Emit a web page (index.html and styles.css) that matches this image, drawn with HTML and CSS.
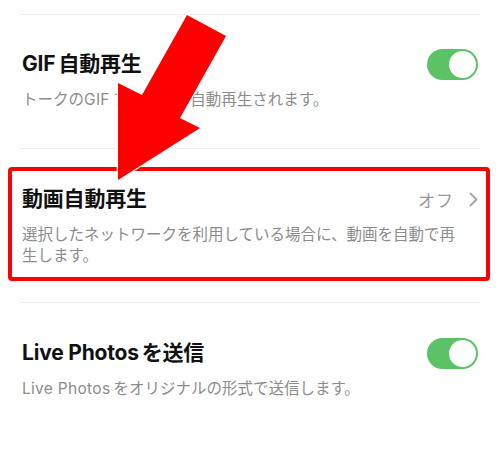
FILE: index.html
```html
<!DOCTYPE html>
<html lang="ja">
<head>
<meta charset="utf-8">
<link rel="stylesheet" href="styles.css">
</head>
<body>
<div class="page">
  <div class="list">
    <div class="row row-gif">
      <div class="row-head">
        <div class="title"><span class="lat">GIF</span>自動再生</div>
        <div class="toggle on"><span class="knob"></span></div>
      </div>
      <div class="sub">トークの<span class="lat">GIF</span>ファイルが自動再生されます。</div>
    </div>
    <div class="row row-video">
      <div class="highlight">
        <div class="row-head">
          <div class="title">動画自動再生</div>
          <div class="value">オフ
            <svg class="chev" width="9" height="15" viewBox="0 0 9 15"><polyline points="1.5,1.5 7.5,7.5 1.5,13.5" fill="none" stroke="#a3a3a3" stroke-width="1.8" stroke-linecap="round" stroke-linejoin="round"/></svg>
          </div>
        </div>
        <div class="sub">選択したネットワークを利用している場合に、動画を自動で再生します。</div>
      </div>
    </div>
    <div class="row row-live">
      <div class="row-head">
        <div class="title"><span class="lat">Live Photos</span>を送信</div>
        <div class="toggle on"><span class="knob"></span></div>
      </div>
      <div class="sub"><span class="lat">Live Photos</span>をオリジナルの形式で送信します。</div>
    </div>
  </div>
  <svg class="arrow" width="500" height="453" viewBox="0 0 500 453">
    <polygon points="187,15 226,36 180,118 200,128 118,180 118,83 142,95" fill="#fe0000" stroke="#ffffff" stroke-width="2.5" stroke-linejoin="miter" paint-order="stroke"/>
  </svg>
</div>
</body>
</html>
```
FILE: styles.css
```css
* { box-sizing: border-box; }
html, body {
  margin: 0;
  padding: 0;
  background: #ffffff;
}
body {
  font-family: Inter, "Noto Sans CJK JP", sans-serif;
  color: #111111;
}
.page {
  position: relative;
  width: 500px;
  height: 453px;
  overflow: hidden;
}
.list {
  padding: 14px 20px 0;
}
.row {
  border-top: 1px solid #eeeeee;
}
.row-gif {
  padding: 35px 2px 38px;
}
.row-video {
  padding: 18px 0 21px;
}
.row-live {
  padding: 36px 2px 30px;
}
.row-head {
  display: flex;
  align-items: center;
  justify-content: space-between;
  height: 28px;
}
.title {
  font-size: 21px;
  line-height: 28px;
  font-weight: 700;
  letter-spacing: -0.2px;
}
.lat {
  margin-right: 3px;
}
.sub {
  margin-top: 11px;
  font-size: 15.5px;
  line-height: 21px;
  color: #8c8c8c;
}
.sub .lat {
  margin-right: 3px;
  letter-spacing: 0.3px;
}
.highlight {
  margin: 0 -10px 0 -12px;
  border: 4px solid #fe0000;
  border-radius: 4px;
  padding: 14px 8px 11px 10px;
}
.highlight .sub {
  padding-right: 22px;
}
.value {
  display: flex;
  align-items: center;
  gap: 15px;
  font-size: 17px;
  color: #9a9a9a;
  letter-spacing: 1px;
}
.chev {
  display: block;
}
.toggle {
  position: relative;
  width: 51px;
  height: 31px;
  border-radius: 16px;
  background: #5bc365;
}
.knob {
  position: absolute;
  top: 2px;
  right: 2px;
  width: 27px;
  height: 27px;
  border-radius: 50%;
  background: #ffffff;
}
.arrow {
  position: absolute;
  left: 0;
  top: 0;
  pointer-events: none;
}
```
